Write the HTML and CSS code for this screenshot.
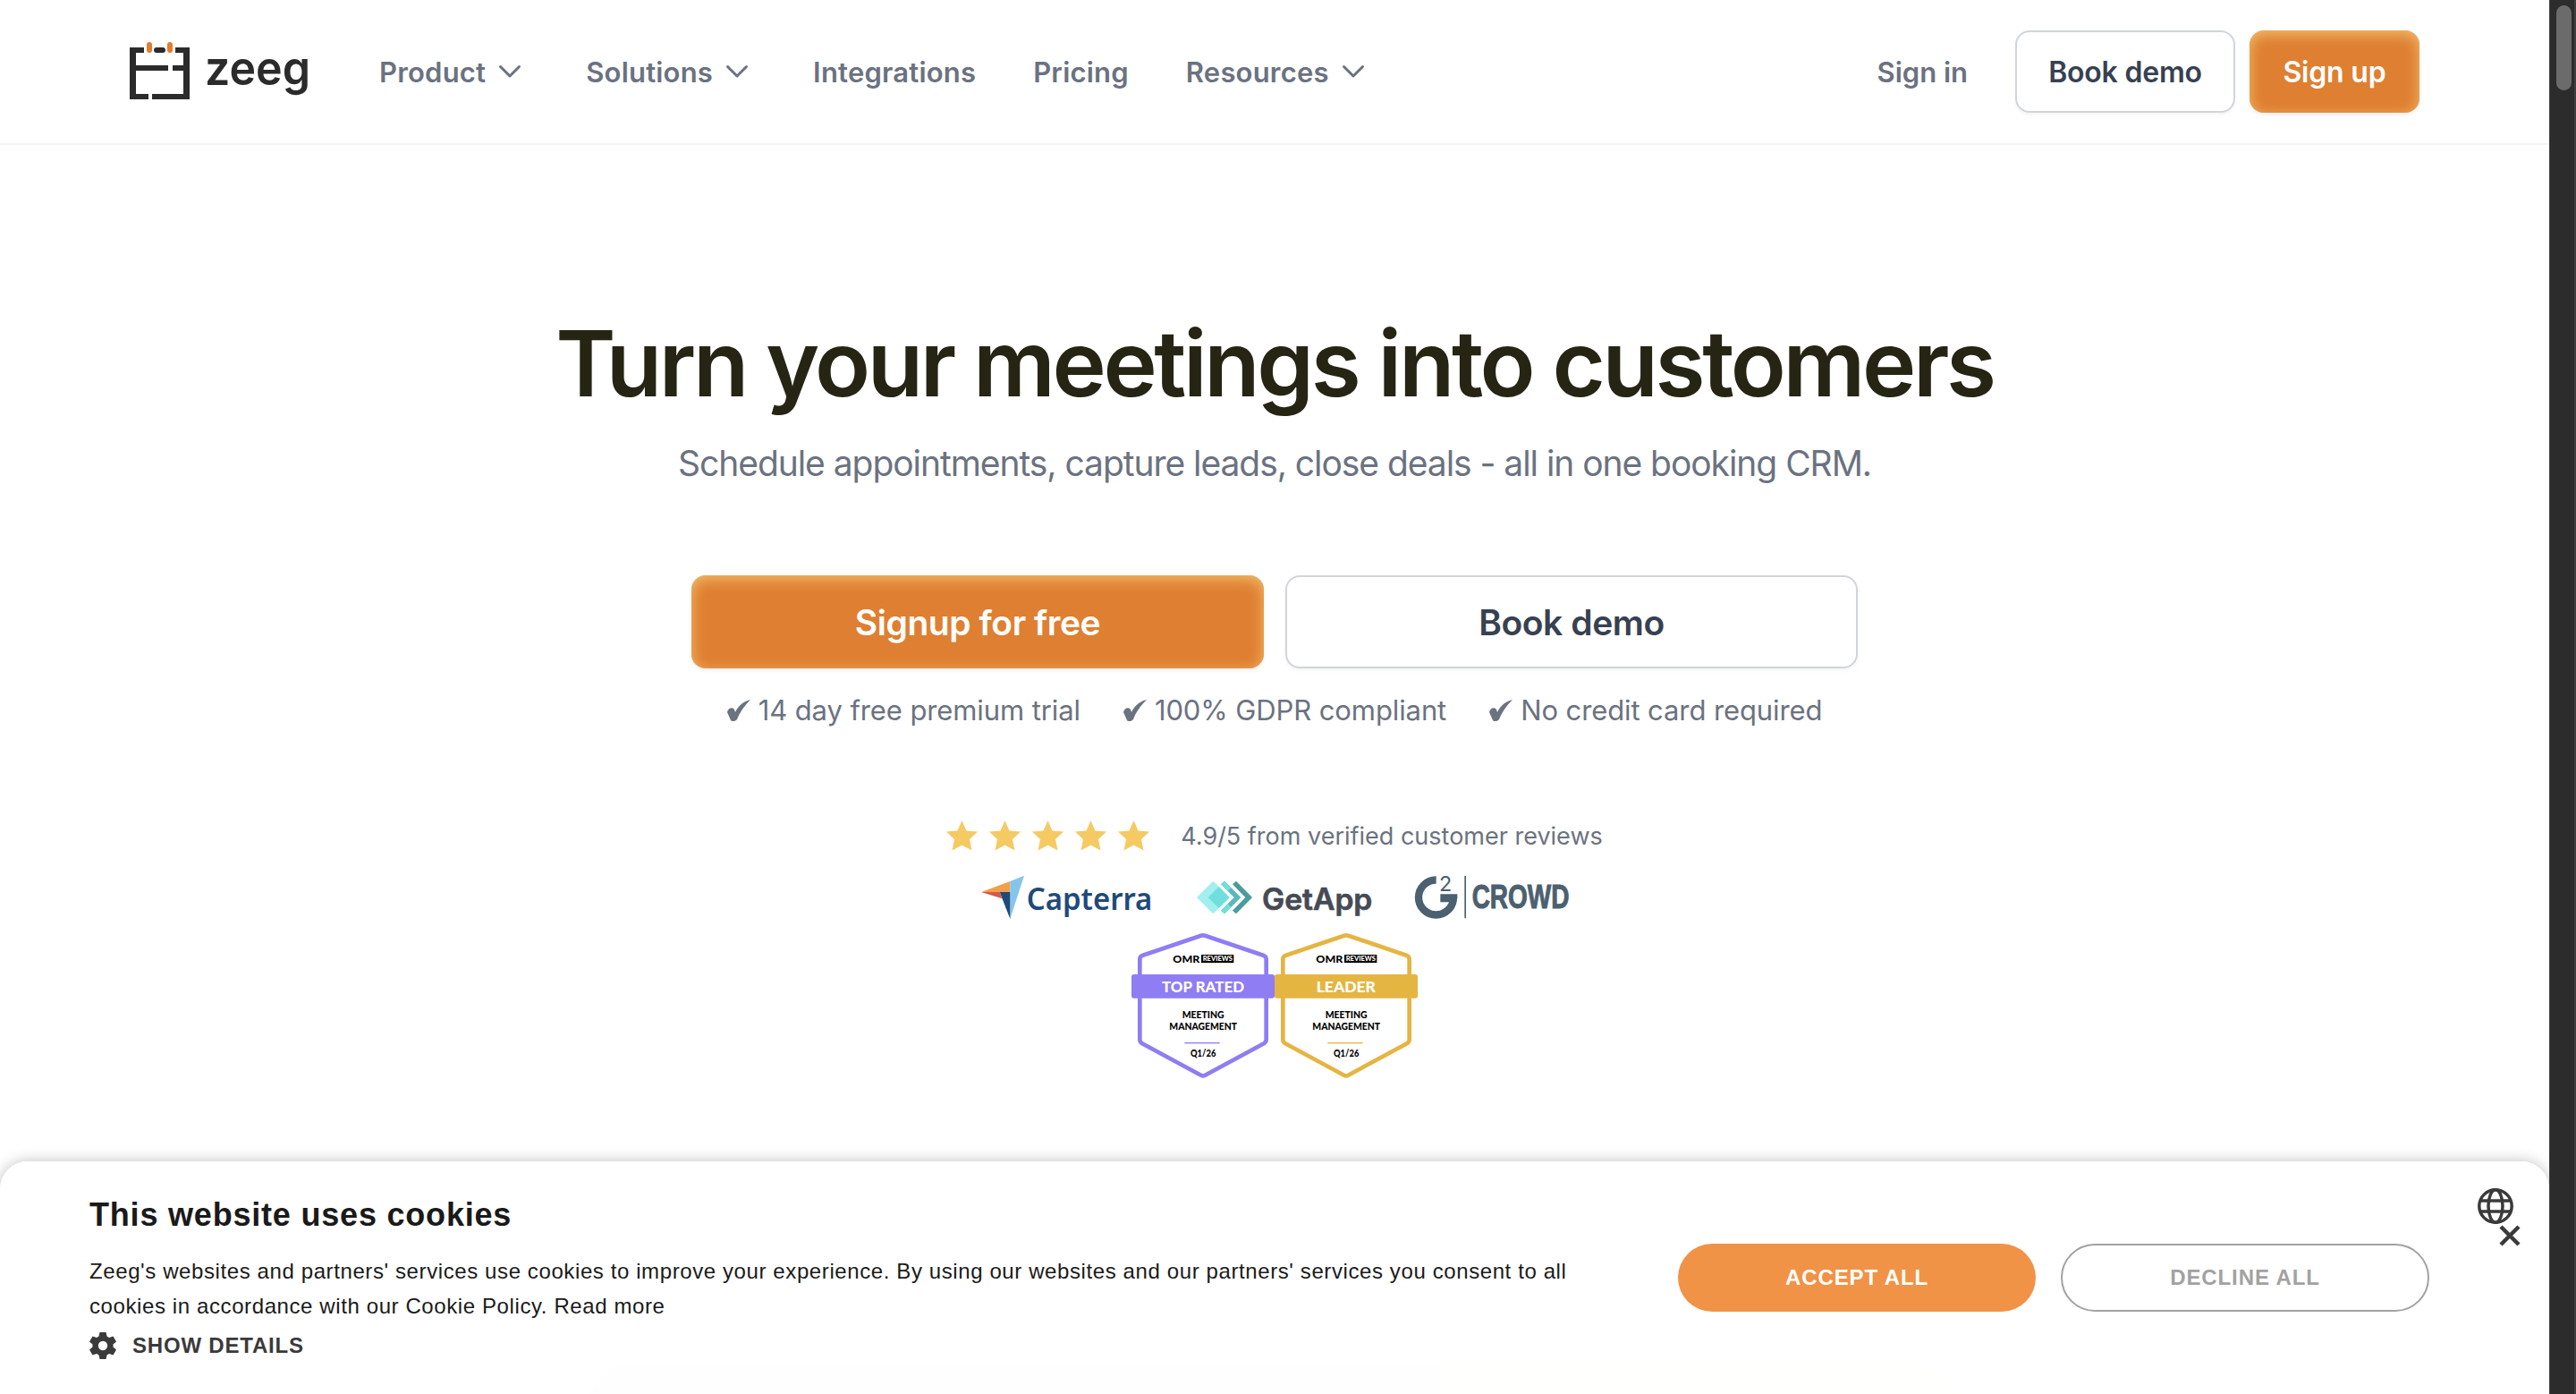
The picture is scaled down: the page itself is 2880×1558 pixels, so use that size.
FILE: index.html
```html
<!DOCTYPE html>
<html lang="en">
<head>
    <meta charset="UTF-8">
    <meta name="viewport" content="width=device-width, initial-scale=1.0">
    <title>Zeeg</title>
    <link rel="stylesheet" href="styles.css">
</head>
<body>
    <div class="page">
        <header class="header">
            <a class="logo" href="#">
                <svg width="202" height="66" viewBox="0 0 202 66">
                    <g fill="#2b2b2b">
                        <path d="M0 6h16v6H7v14h36v6H7v26h14v6H0z"/>
                        <path d="M67 6H51v6h9v14H48v6h12v26H25v6h42z"/>
                        <rect x="27" y="6" width="13" height="6" rx="3"/>
                    </g>
                    <g fill="#df7f31">
                        <rect x="19" y="0" width="6" height="12" rx="3"/>
                        <rect x="42" y="0" width="6" height="12" rx="3"/>
                    </g>
                    <text class="logoText" x="84" y="48" textLength="118" lengthAdjust="spacingAndGlyphs">zeeg</text>
                </svg>
            </a>

            <nav class="nav">
                <a class="navItem" href="#">Product <svg class="chevron" viewBox="0 0 24 14"><path d="M1.5 1.5 12 12 22.5 1.5"/></svg></a>
                <a class="navItem" href="#">Solutions <svg class="chevron" viewBox="0 0 24 14"><path d="M1.5 1.5 12 12 22.5 1.5"/></svg></a>
                <a class="navItem" href="#">Integrations</a>
                <a class="navItem" href="#">Pricing</a>
                <a class="navItem" href="#">Resources <svg class="chevron" viewBox="0 0 24 14"><path d="M1.5 1.5 12 12 22.5 1.5"/></svg></a>
            </nav>

            <div class="actions">
                <a class="signIn" href="#">Sign in</a>
                <a class="btn btnLight" href="#">Book demo</a>
                <a class="btn btnOrange" href="#">Sign up</a>
            </div>
        </header>

        <main class="hero">
            <h1>Turn your meetings into customers</h1>
            <p class="subtitle">Schedule appointments, capture leads, close deals - all in one booking CRM.</p>

            <div class="heroButtons">
                <a class="btn btnBig btnOrange" href="#">Signup for free</a>
                <a class="btn btnBig btnLight" href="#">Book demo</a>
            </div>

            <ul class="perks">
                <li><svg class="tick" viewBox="0 0 26 24"><path d="M0 14C1 9 6 8 8 11l1 3C12 8 17 2 26 0 19 7 14 14 11 22c-1 2-6 3-7 1z"/></svg>14 day free premium trial</li>
                <li><svg class="tick" viewBox="0 0 26 24"><path d="M0 14C1 9 6 8 8 11l1 3C12 8 17 2 26 0 19 7 14 14 11 22c-1 2-6 3-7 1z"/></svg>100% GDPR compliant</li>
                <li><svg class="tick" viewBox="0 0 26 24"><path d="M0 14C1 9 6 8 8 11l1 3C12 8 17 2 26 0 19 7 14 14 11 22c-1 2-6 3-7 1z"/></svg>No credit card required</li>
            </ul>

            <div class="rating">
                <svg width="228" height="34" viewBox="0 0 228 34" fill="#f5ca63">
                    <defs><path id="star" d="M17.5 0 22.500 11.500 35 12.500 26 21 28.500 33.500 17.500 27.500 6.500 33.500 9 21 0 12.500 12.500 11.500z"/></defs>
                    <use href="#star"/>
                    <use href="#star" x="48"/>
                    <use href="#star" x="96"/>
                    <use href="#star" x="144"/>
                    <use href="#star" x="192"/>
                </svg>
                4.9/5 from verified customer reviews
            </div>

            <div class="logos">
                <svg width="192" height="48" viewBox="24 42 576 144">
                    <path fill="#f0a04b" d="M24 96 121 60V96z"/>
                    <path fill="#86c5ea" d="M121 60 168 41 121 186z"/>
                    <path fill="#1f4a7b" d="M86 96h35v90z"/>
                    <path fill="#d5584b" d="M24 96h62l8 22z"/>
                    <text class="capterra" x="176" y="155" textLength="422" lengthAdjust="spacingAndGlyphs">Capterra</text>
                </svg>
                <svg width="197" height="48" viewBox="744 42 591 144">
                    <path fill="#4a9c9a" d="M867 70 879 59 933 114 879 169 867 158 910 114z"/>
                    <path fill="#5ab9b8" d="M828 70 840 59 895 114 840 169 828 158 872 114z"/>
                    <path fill="#73dedb" d="M828 70 840 59 863 82 851 93zM828 158 840 169 863 146 851 135z"/>
                    <path fill="#a1efef" d="M747 114 802 59 857 114 802 169z"/>
                    <path fill="#6edfdd" d="M785 114 821 78 857 114 821 150z"/>
                    <text class="getapp" x="966" y="155" textLength="370" lengthAdjust="spacingAndGlyphs">GetApp</text>
                </svg>
                <svg width="172" height="48" viewBox="546 42 516 144">
                    <path class="gRing" d="M617 55.5A58.5 58.5 0 1 0 675 114"/>
                    <path fill="#4b6070" d="M631 103h57v14l-13 13h-44z"/>
                    <text class="g2" x="627" y="93">2</text>
                    <path fill="#4b6070" d="M712 42h5v142h-5z"/>
                    <text class="crowd" x="737" y="149" textLength="326" lengthAdjust="spacingAndGlyphs">CROWD</text>
                </svg>
            </div>

            <div class="badges">
                <svg class="badge topRated" viewBox="45 36 480 492">
                    <path class="hex" d="M73 396V126q0-10 10-13L278 47q7-2 14 0l195 66q10 4 10 13v270q0 8-8 13L292 515q-7 4-14 0L81 409q-8-5-8-13z"/>
                    <rect class="band" x="45" y="177" width="480" height="80" rx="8"/>
                    <text class="bandText" x="147" y="237" textLength="276" lengthAdjust="spacingAndGlyphs">TOP RATED</text>
                    <text class="omr" x="184" y="138" textLength="90" lengthAdjust="spacingAndGlyphs">OMR</text>
                    <rect x="279" y="111" width="109" height="27"/>
                    <text class="reviews" x="284" y="133" textLength="100" lengthAdjust="spacingAndGlyphs">REVIEWS</text>
                    <text class="award" x="215" y="323" textLength="141" lengthAdjust="spacingAndGlyphs">MEETING</text>
                    <text class="award" x="172" y="363" textLength="227" lengthAdjust="spacingAndGlyphs">MANAGEMENT</text>
                    <rect class="rule" x="223" y="405" width="118" height="4"/>
                    <text class="award" x="243" y="454" textLength="85" lengthAdjust="spacingAndGlyphs">Q1/26</text>
                </svg>
                <svg class="badge leader" viewBox="45 36 480 492">
                    <path class="hex" d="M73 396V126q0-10 10-13L278 47q7-2 14 0l195 66q10 4 10 13v270q0 8-8 13L292 515q-7 4-14 0L81 409q-8-5-8-13z"/>
                    <rect class="band" x="45" y="177" width="480" height="80" rx="8"/>
                    <text class="bandText" x="185" y="237" textLength="199" lengthAdjust="spacingAndGlyphs">LEADER</text>
                    <text class="omr" x="184" y="138" textLength="90" lengthAdjust="spacingAndGlyphs">OMR</text>
                    <rect x="279" y="111" width="109" height="27"/>
                    <text class="reviews" x="284" y="133" textLength="100" lengthAdjust="spacingAndGlyphs">REVIEWS</text>
                    <text class="award" x="215" y="323" textLength="141" lengthAdjust="spacingAndGlyphs">MEETING</text>
                    <text class="award" x="172" y="363" textLength="227" lengthAdjust="spacingAndGlyphs">MANAGEMENT</text>
                    <rect class="rule" x="223" y="405" width="118" height="4"/>
                    <text class="award" x="243" y="454" textLength="85" lengthAdjust="spacingAndGlyphs">Q1/26</text>
                </svg>
            </div>

            <div class="preview"></div>
        </main>

        <section class="cookies">
            <div class="cookieText">
                <h2>This website uses cookies</h2>
                <p>Zeeg's websites and partners' services use cookies to improve your experience. By using our websites and our partners' services you consent to all<br>cookies in accordance with our Cookie Policy. Read more</p>
                <a class="details" href="#">
                    <svg width="30" height="30" viewBox="0 0 30 30"><path fill="#3a3a3a" fill-rule="evenodd" d="M11.5 0h7l1 4.500 2.500 1.500 4.500-1.500L30 10.500 26.500 13.500v3L30 19.500 26.500 25.500 22 24l-2.500 1.500-1 4.500h-7l-1-4.500L8 24 3.500 25.500 0 19.500 3.500 16.500v-3L0 10.500 3.500 4.500 8 6l2.500-1.500zM15 9.800a5.200 5.200 0 1 0 0 10.400 5.200 5.200 0 0 0 0-10.400z"/></svg>
                    SHOW DETAILS
                </a>
            </div>
            <div class="cookieButtons">
                <button class="accept">ACCEPT ALL</button>
                <button class="decline">DECLINE ALL</button>
            </div>
            <div class="cookieIcons">
                <svg class="globe" viewBox="0 0 40 40"><circle cx="20" cy="20" r="18.2"/><ellipse cx="20" cy="20" rx="8" ry="18.2"/><path d="M3 14h34M3 26h34"/></svg>
                <svg class="close" viewBox="0 0 24 24"><path d="M2 2 22 22M22 2 2 22"/></svg>
            </div>
        </section>
    </div>
    <div class="scrollbar"><div class="thumb"></div></div>
</body>
</html>
```
FILE: styles.css
```css
* {
    box-sizing: border-box;
}

body {
    margin: 0;
    height: 1558px;
    display: flex;
    overflow: hidden;
    background-color: white;
    color: #6b7280;
    font-family: Inter, "Liberation Sans", sans-serif;
}

a {
    color: inherit;
    text-decoration: none;
}

svg {
    flex-shrink: 0;
    overflow: visible;
}

.page {
    position: relative;
    width: 2850px;
    height: 1558px;
    overflow: hidden;
}

.scrollbar {
    width: 30px;
    background-color: #2c2c2c;
    border-left: 1px solid #3d3d3d;
    border-right: 2px solid #3f3f3f;
    padding: 6px 5px 0 7px;
}

.thumb {
    width: 17px;
    height: 95px;
    border-radius: 9px;
    background-color: #6b6b6b;
}

/* header */

.header {
    height: 162px;
    border-bottom: 2px solid #f3f4f6;
    padding: 0 145px;
    display: flex;
    align-items: center;
}

.logo {
    display: flex;
    width: 279px;
}

.logoText {
    font-size: 53px;
    font-weight: 600;
    fill: #2b2b2b;
}

.nav {
    display: flex;
    gap: 64px;
}

.navItem {
    display: flex;
    align-items: center;
    gap: 15px;
    font-size: 31px;
    font-weight: 600;
    letter-spacing: 0.2px;
}

.chevron {
    width: 24px;
    height: 14px;
    margin-right: 9px;
    fill: none;
    stroke: #6b7280;
    stroke-width: 3;
    stroke-linecap: round;
    stroke-linejoin: round;
}

.actions {
    display: flex;
    align-items: center;
    gap: 16px;
    margin-left: auto;
}

.signIn {
    margin-right: 37px;
    font-size: 31px;
    font-weight: 600;
}

.btn {
    display: flex;
    align-items: center;
    justify-content: center;
    height: 92px;
    border-radius: 16px;
    font-size: 32px;
    font-weight: 600;
    letter-spacing: -0.2px;
}

.header .btnLight {
    width: 246px;
}

.header .btnOrange {
    width: 190px;
}

.btnLight {
    color: #374151;
    background-color: white;
    border: 2px solid #d1d5db;
    box-shadow: 0 2px 4px rgba(0, 0, 0, 0.05);
}

.btnOrange {
    color: white;
    background-color: #df7f31;
    box-shadow: inset 0 4px 16px rgba(248, 205, 125, 0.8), 0 2px 4px rgba(0, 0, 0, 0.08);
}

/* hero */

.hero {
    display: flex;
    flex-direction: column;
    align-items: center;
}

h1 {
    margin: 184px 0 0;
    font-size: 102px;
    line-height: 120px;
    font-weight: 600;
    letter-spacing: -3.4px;
    color: #262413;
}

.subtitle {
    margin: 24px 0 0;
    font-size: 39px;
    line-height: 56px;
    letter-spacing: -1.05px;
}

.heroButtons {
    display: flex;
    gap: 24px;
    margin-top: 97px;
}

.btnBig {
    width: 640px;
    height: 104px;
    font-size: 39px;
    letter-spacing: -0.45px;
}

.perks {
    list-style: none;
    margin: 23px 0 0;
    padding: 0;
    display: flex;
    gap: 48px;
    font-size: 31px;
    line-height: 48px;
    letter-spacing: -0.1px;
}

.perks li {
    display: flex;
    align-items: center;
    gap: 9px;
}

.tick {
    width: 26px;
    height: 24px;
    fill: #6b7280;
}

.rating {
    display: flex;
    align-items: center;
    gap: 34px;
    margin-top: 95px;
    height: 42px;
    font-size: 27px;
}

.logos {
    display: flex;
    gap: 48px;
    margin-top: 24px;
}

.capterra {
    font: 600 103px "Noto Sans", sans-serif;
    fill: #1f4a7b;
}

.getapp {
    font: 600 100px Inter, sans-serif;
    fill: #454b54;
    stroke: #454b54;
    stroke-width: 2;
}

.gRing {
    fill: none;
    stroke: #4b6070;
    stroke-width: 25;
}

.g2 {
    font: 400 70px Inter, sans-serif;
    fill: #4b6070;
}

.crowd {
    font: 700 108px "Liberation Sans", sans-serif;
    fill: #4b6070;
    stroke: #4b6070;
    stroke-width: 3;
}

.badges {
    display: flex;
    margin-top: 15px;
}

.badge {
    width: 160px;
    height: 164px;
    font-family: Lato, sans-serif;
}

.topRated {
    color: #8f7df3;
}

.leader {
    color: #e5b542;
}

.hex {
    fill: white;
    stroke: currentColor;
    stroke-width: 14;
}

.band,
.rule {
    fill: currentColor;
}

.bandText {
    font-size: 52px;
    font-weight: 900;
    fill: white;
}

.omr {
    font-size: 35px;
    font-weight: 900;
    fill: black;
}

.reviews {
    font-size: 25px;
    font-weight: 900;
    fill: white;
}

.award {
    font-size: 32px;
    font-weight: 900;
    fill: black;
}

.preview {
    width: 1533px;
    height: 200px;
    margin-top: 317px;
    border-radius: 48px;
    background: linear-gradient(to right, #f4c9d0, #fff4dc);
}

/* cookie banner, sits over the page */

.cookies {
    position: absolute;
    left: 0;
    right: 0;
    bottom: 0;
    height: 260px;
    border-radius: 31px 31px 0 0;
    background-color: rgba(255, 255, 255, 0.97);
    box-shadow: 0 0 16px rgba(0, 0, 0, 0.25);
    display: flex;
    font-family: "Liberation Sans", Arial, sans-serif;
    color: #1a1a1a;
}

.cookieText {
    width: 1876px;
    flex-shrink: 0;
    padding: 39px 0 0 100px;
}

.cookieText h2 {
    margin: 0;
    font-size: 36px;
    line-height: 42px;
    letter-spacing: 0.8px;
}

.cookieText p {
    margin: 22px 0 0;
    font-size: 24px;
    line-height: 39px;
    letter-spacing: 0.6px;
    white-space: nowrap;
}

.details {
    display: flex;
    align-items: center;
    gap: 18px;
    margin-top: 10px;
    font-size: 24px;
    font-weight: 700;
    letter-spacing: 0.8px;
    color: #3a3a3a;
}

.cookieButtons {
    display: flex;
    gap: 28px;
    padding-top: 92px;
}

.cookieButtons button {
    height: 76px;
    border-radius: 38px;
    border: 0;
    font: 700 24px "Liberation Sans", Arial, sans-serif;
    letter-spacing: 0.9px;
}

.accept {
    width: 400px;
    background-color: #f09347;
    color: white;
}

.cookieButtons .decline {
    width: 412px;
    background-color: white;
    border: 2px solid #a2a2a2;
    color: #a2a2a2;
}

.cookieIcons {
    display: flex;
    flex-direction: column;
    width: 48px;
    padding-top: 30px;
    margin-left: 54px;
    fill: none;
    stroke: #3a3a3a;
}

.globe {
    width: 40px;
    height: 40px;
    stroke-width: 3.5;
}

.close {
    width: 24px;
    height: 24px;
    margin: 1px 0 0 24px;
    stroke-width: 4.5;
}
```
